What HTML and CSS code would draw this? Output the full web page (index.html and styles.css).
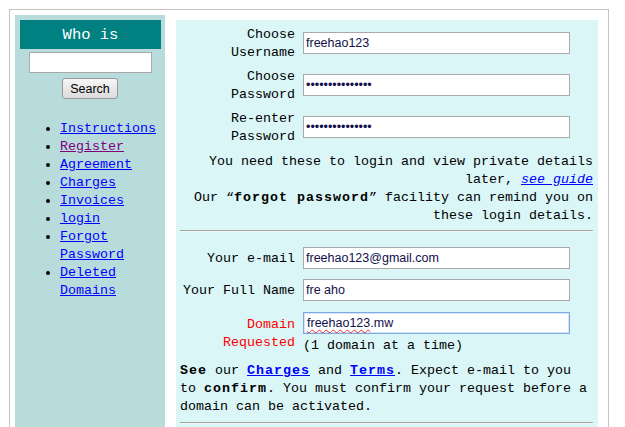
FILE: index.html
```html
<!DOCTYPE html>
<html>
<head>
<meta charset="utf-8">
<link rel="stylesheet" href="styles.css">
</head>
<body>
<div class="outer">
  <div class="side">
    <div class="whois">Who is</div>
    <input class="search-input" type="text" value="">
    <button class="search-btn">Search</button>
    <ul class="menu">
      <li><a href="#">Instructions</a></li>
      <li><a href="#" class="visited">Register</a></li>
      <li><a href="#">Agreement</a></li>
      <li><a href="#">Charges</a></li>
      <li><a href="#">Invoices</a></li>
      <li><a href="#">login</a></li>
      <li><a href="#">Forgot Password</a></li>
      <li><a href="#">Deleted Domains</a></li>
    </ul>
  </div>
  <div class="main">
    <div class="row tall">
      <div class="label">Choose Username</div>
      <div class="cell"><input class="field" type="text" value="freehao123"></div>
    </div>
    <div class="row tall">
      <div class="label">Choose Password</div>
      <div class="cell"><input class="field" type="password" value="freehao12345678"></div>
    </div>
    <div class="row tall">
      <div class="label">Re-enter Password</div>
      <div class="cell"><input class="field" type="password" value="freehao12345678"></div>
    </div>
    <p class="note first">You need these to login and view private details later, <a href="#" class="guide">see guide</a></p>
    <p class="note">Our “<b>forgot password</b>” facility can remind you on these login details.</p>
    <div class="rule"></div>
    <div class="row single first-single">
      <div class="label">Your e-mail</div>
      <div class="cell"><input class="field" type="text" value="freehao123@gmail.com"></div>
    </div>
    <div class="row single">
      <div class="label">Your Full Name</div>
      <div class="cell"><input class="field" type="text" value="fre aho"></div>
    </div>
    <div class="row domain">
      <div class="label red">Domain Requested</div>
      <div class="cell">
        <div class="field focus"><span class="spell">freehao123</span>.mw</div>
        <div class="hint">(1 domain at a time)</div>
      </div>
    </div>
    <p class="terms"><b>See</b> our <a href="#"><b>Charges</b></a> and <a href="#"><b>Terms</b></a>. Expect e-mail to you to <b>confirm</b>. You must confirm your request before a domain can be activated.</p>
    <div class="rule bottom"></div>
  </div>
</div>
</body>
</html>
```
FILE: styles.css
```css
html, body {
  margin: 0;
  padding: 0;
  background: #ffffff;
}
body {
  font-family: "Liberation Mono", "DejaVu Sans Mono", monospace;
  font-size: 13.333px;
  line-height: 18px;
  color: #000;
  overflow: hidden;
}
.outer {
  margin: 9px 0 0 9px;
  width: 598px;
  height: 440px;
  border: 1px solid #c4c4c4;
  border-bottom: none;
  display: flex;
  align-items: flex-start;
}
.side {
  margin: 5px 0 0 5px;
  width: 150px;
  height: 430px;
  background: #b8dcdc;
  display: flex;
  flex-direction: column;
  align-items: center;
}
.whois {
  margin: 5px 4px 0 5px;
  align-self: stretch;
  height: 29px;
  line-height: 31px;
  background: #008080;
  color: #ffffff;
  text-align: center;
  font-size: 15.5px;
}
.search-input {
  margin: 3px 0 0 1px;
  box-sizing: border-box;
  width: 123px;
  height: 21px;
  border: 1px solid #a9a9a9;
  background: #fff;
  padding: 0 2px;
}
.search-btn {
  margin: 5px 0 0 0;
  box-sizing: border-box;
  width: 56px;
  height: 21px;
  padding: 0;
  border: 1px solid #9a9a9a;
  border-radius: 3px;
  background: linear-gradient(#f7f7f7, #e8e8e8 50%, #dcdcdc);
  font-family: "Liberation Sans", Arial, sans-serif;
  font-size: 12.5px;
  color: #000;
}
.menu {
  align-self: stretch;
  margin: 21px 0 0 0;
  padding: 0 0 0 45px;
  list-style: disc;
}
.menu li {
  line-height: 18px;
}
a {
  color: #0000ff;
  text-decoration: underline;
}
a.visited {
  color: #800080;
}
.main {
  margin: 10px 0 0 11px;
  width: 413px;
  height: 420px;
  padding: 3px 5px 0 4px;
  background: #daf6f6;
}
.row {
  display: grid;
  grid-template-columns: 115px 1fr;
  column-gap: 8px;
  align-items: center;
}
.row.tall {
  height: 42px;
}
.row.single {
  height: 32px;
}
.row.first-single {
  margin-top: 11px;
}
.label {
  text-align: right;
}
.label.red {
  color: #ff0000;
}
.field {
  display: block;
  box-sizing: border-box;
  width: 267px;
  height: 22px;
  margin: 0 0 2px 0;
  padding: 0 2px;
  border: 1px solid #a9a9a9;
  background: #fff;
  font-family: "Liberation Sans", Arial, sans-serif;
  font-size: 12.5px;
  color: #10104a;
  outline: none;
}
.field.focus {
  line-height: 20px;
  margin-bottom: 0;
  border: 1px solid #7fa9e0;
  box-shadow: inset 0 0 0 1px #d2e4f7;
  padding-left: 3px;
}
.spell {
  text-decoration: underline wavy #e03030;
  text-decoration-thickness: 1px;
  text-underline-offset: 2px;
}
.row.domain {
  padding: 5px 0 5px 0;
}
.hint {
  margin-top: 3px;
  line-height: 18px;
}
.note {
  margin: 0;
  text-align: right;
}
.note.first {
  margin-top: 4px;
}
.guide {
  font-style: italic;
}
b {
  font-weight: bold;
  letter-spacing: 1px;
}
.rule {
  margin-top: 5px;
  height: 0;
  border-top: 1px solid #a4a4a4;
  border-bottom: 1px solid #eef8f8;
}
.terms {
  margin: 2px 0 0 0;
  text-align: left;
}
.rule.bottom {
  margin-top: 6px;
}
```
